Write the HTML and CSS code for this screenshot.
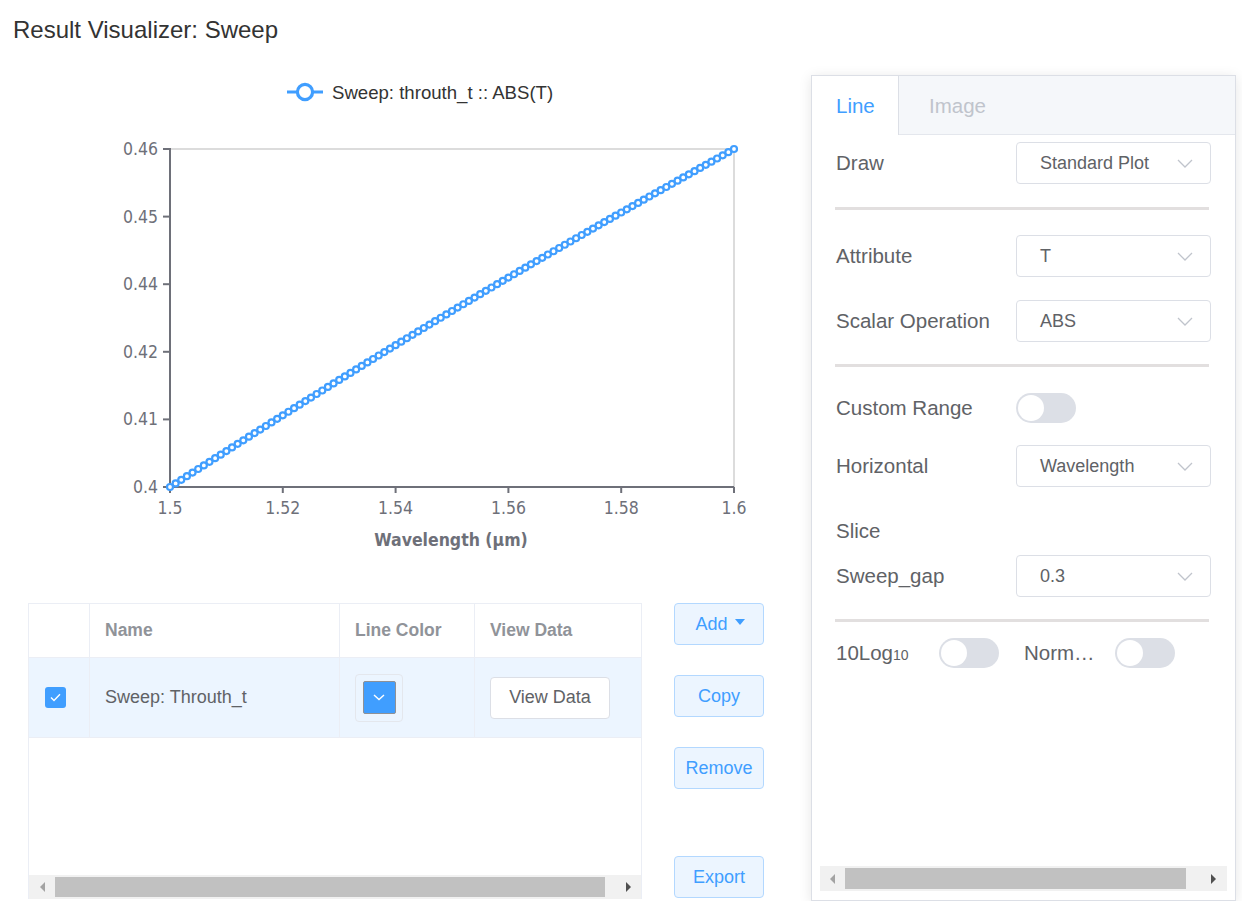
FILE: index.html
```html
<!DOCTYPE html>
<html>
<head>
<meta charset="utf-8">
<title>Result Visualizer</title>
<link rel="stylesheet" href="styles.css">
</head>
<body>
<div class="page">
  <div class="title">Result Visualizer: Sweep</div>
  <div class="main">
    <div class="left">
      <svg class="chart" width="800" height="543" viewBox="0 60 800 543">
        <line class="legend-line" x1="287" y1="92" x2="323" y2="92"/>
        <circle class="legend-dot" cx="305" cy="92" r="7.6"/>
        <text class="legend-text" x="332" y="98.5">Sweep: throuth_t :: ABS(T)</text>

        <line class="grid-line" x1="170" y1="149" x2="734" y2="149"/>
        <line class="grid-line" x1="734" y1="149" x2="734" y2="487"/>

        <line class="axis-line" x1="170" y1="148" x2="170" y2="488"/>
        <line class="axis-line" x1="169" y1="487" x2="734" y2="487"/>

        <line class="axis-line" x1="163" y1="149" x2="170" y2="149"/>
        <line class="axis-line" x1="163" y1="216.6" x2="170" y2="216.6"/>
        <line class="axis-line" x1="163" y1="284.2" x2="170" y2="284.2"/>
        <line class="axis-line" x1="163" y1="351.8" x2="170" y2="351.8"/>
        <line class="axis-line" x1="163" y1="419.4" x2="170" y2="419.4"/>
        <line class="axis-line" x1="163" y1="487" x2="170" y2="487"/>

        <line class="axis-line" x1="170" y1="487" x2="170" y2="493"/>
        <line class="axis-line" x1="282.8" y1="487" x2="282.8" y2="493"/>
        <line class="axis-line" x1="395.6" y1="487" x2="395.6" y2="493"/>
        <line class="axis-line" x1="508.4" y1="487" x2="508.4" y2="493"/>
        <line class="axis-line" x1="621.2" y1="487" x2="621.2" y2="493"/>
        <line class="axis-line" x1="734" y1="487" x2="734" y2="493"/>

        <text class="tick-label y-label" x="158" y="155">0.46</text>
        <text class="tick-label y-label" x="158" y="222.6">0.45</text>
        <text class="tick-label y-label" x="158" y="290.2">0.44</text>
        <text class="tick-label y-label" x="158" y="357.8">0.42</text>
        <text class="tick-label y-label" x="158" y="425.4">0.41</text>
        <text class="tick-label y-label" x="158" y="493">0.4</text>

        <text class="tick-label x-label" x="170" y="514">1.5</text>
        <text class="tick-label x-label" x="282.8" y="514">1.52</text>
        <text class="tick-label x-label" x="395.6" y="514">1.54</text>
        <text class="tick-label x-label" x="508.4" y="514">1.56</text>
        <text class="tick-label x-label" x="621.2" y="514">1.58</text>
        <text class="tick-label x-label" x="734" y="514">1.6</text>

        <text class="axis-name" x="451" y="546">Wavelength (μm)</text>

        <g id="series"></g>
      </svg>

      <div class="lower">
        <div class="table">
          <div class="trow thead">
            <div class="cell c-check"></div>
            <div class="cell c-name">Name</div>
            <div class="cell c-color">Line Color</div>
            <div class="cell c-view">View Data</div>
          </div>
          <div class="trow tbody">
            <div class="cell c-check">
              <span class="checkbox">
                <svg width="11" height="9" viewBox="0 0 11 9"><path class="check-mark" d="M1 4.5 L4 7.5 L10 1.2"/></svg>
              </span>
            </div>
            <div class="cell c-name">Sweep: Throuth_t</div>
            <div class="cell c-color">
              <span class="color-picker">
                <span class="swatch">
                  <svg width="12" height="7" viewBox="0 0 12 7"><path class="swatch-chevron" d="M1 1 L6 5.5 L11 1"/></svg>
                </span>
              </span>
            </div>
            <div class="cell c-view"><span class="btn-plain">View Data</span></div>
          </div>
          <div class="table-fill"></div>
          <div class="hscroll table-scroll">
            <span class="arrow arrow-left disabled"></span>
            <span class="thumb"></span>
            <span class="arrow arrow-right"></span>
          </div>
        </div>

        <div class="actions">
          <span class="btn-light btn-add">Add <span class="caret"></span></span>
          <span class="btn-light btn-copy">Copy</span>
          <span class="btn-light btn-remove">Remove</span>
          <span class="btn-light btn-export">Export</span>
        </div>
      </div>
    </div>

    <div class="panel">
      <div class="tabs">
        <div class="tab active">Line</div>
        <div class="tab tab-image">Image</div>
      </div>
      <div class="panel-body">
        <div class="form-row row-draw">
          <div class="label">Draw</div>
          <div class="select"><span class="select-text">Standard Plot</span><svg class="chev" width="16" height="9" viewBox="0 0 16 9"><path d="M1 1 L8 8 L15 1"/></svg></div>
        </div>
        <div class="divider div-1"></div>
        <div class="form-row row-attr">
          <div class="label">Attribute</div>
          <div class="select"><span class="select-text">T</span><svg class="chev" width="16" height="9" viewBox="0 0 16 9"><path d="M1 1 L8 8 L15 1"/></svg></div>
        </div>
        <div class="form-row row-scalar">
          <div class="label">Scalar Operation</div>
          <div class="select"><span class="select-text">ABS</span><svg class="chev" width="16" height="9" viewBox="0 0 16 9"><path d="M1 1 L8 8 L15 1"/></svg></div>
        </div>
        <div class="divider div-2"></div>
        <div class="form-row row-range">
          <div class="label">Custom Range</div>
          <span class="switch"><span class="knob"></span></span>
        </div>
        <div class="form-row row-horiz">
          <div class="label">Horizontal</div>
          <div class="select"><span class="select-text">Wavelength</span><svg class="chev" width="16" height="9" viewBox="0 0 16 9"><path d="M1 1 L8 8 L15 1"/></svg></div>
        </div>
        <div class="form-row row-slice">
          <div class="label">Slice</div>
        </div>
        <div class="form-row row-gap">
          <div class="label">Sweep_gap</div>
          <div class="select"><span class="select-text">0.3</span><svg class="chev" width="16" height="9" viewBox="0 0 16 9"><path d="M1 1 L8 8 L15 1"/></svg></div>
        </div>
        <div class="divider div-3"></div>
        <div class="form-row row-switches">
          <div class="label label-log">10Log<span class="sub">10</span></div>
          <span class="switch"><span class="knob"></span></span>
          <div class="label label-norm">Norm…</div>
          <span class="switch"><span class="knob"></span></span>
        </div>
      </div>
      <div class="hscroll panel-scroll">
        <span class="arrow arrow-left disabled"></span>
        <span class="thumb"></span>
        <span class="arrow arrow-right"></span>
      </div>
    </div>
  </div>
</div>
<script src="script.js"></script>
</body>
</html>
```

FILE: styles.css
```css
* { box-sizing: border-box; }

body {
  margin: 0;
  background: #ffffff;
  font-family: "Liberation Sans", Arial, sans-serif;
  color: #606266;
}

.page {
  width: 1242px;
}

.title {
  height: 60px;
  line-height: 60px;
  padding-left: 13px;
  font-size: 24px;
  color: #333333;
}

.main {
  display: flex;
  align-items: flex-start;
}

.left {
  width: 811px;
  display: flex;
  flex-direction: column;
}

.chart {
  display: block;
}

/* chart parts */
.legend-line { stroke: #409eff; stroke-width: 3; }
.legend-dot { fill: #ffffff; stroke: #409eff; stroke-width: 3.2; }
.legend-text {
  font-family: "Liberation Sans", Arial, sans-serif;
  font-size: 18.6px;
  fill: #333333;
}
.grid-line { stroke: #dcdcdc; stroke-width: 2; }
.axis-line { stroke: #6e7079; stroke-width: 2; }
.tick-label {
  font-family: "DejaVu Sans Condensed", "DejaVu Sans", sans-serif;
  font-stretch: condensed;
  font-size: 17.5px;
  fill: #6e7079;
}
.y-label { text-anchor: end; }
.x-label { text-anchor: middle; }
.axis-name {
  font-family: "DejaVu Sans Condensed", "DejaVu Sans", sans-serif;
  font-stretch: condensed;
  font-weight: bold;
  font-size: 17.5px;
  fill: #6e7079;
  text-anchor: middle;
}
.series-line { fill: none; stroke: #409eff; stroke-width: 2.5; }
.series-dot { fill: #ffffff; stroke: #409eff; stroke-width: 2.2; }

/* lower area */
.lower {
  display: flex;
  align-items: flex-start;
  padding-left: 28px;
}

.table {
  width: 614px;
  height: 296px;
  border: 1px solid #ebeef5;
  border-bottom: none;
  display: flex;
  flex-direction: column;
}

.trow {
  display: flex;
}

.thead {
  height: 54px;
  border-bottom: 1px solid #ebeef5;
  font-weight: bold;
  font-size: 17.5px;
  color: #909399;
}

.tbody {
  height: 80px;
  background: #ecf5ff;
  border-bottom: 1px solid #ebeef5;
  font-size: 18px;
  color: #606266;
}

.cell {
  display: flex;
  align-items: center;
  padding-left: 15px;
  border-right: 1px solid #ebeef5;
}

.c-check { width: 61px; padding-left: 16px; }
.c-name { width: 250px; }
.c-color { width: 135px; }
.c-view { width: 166px; border-right: none; }

.checkbox {
  width: 21px;
  height: 21px;
  border-radius: 3px;
  background: #409eff;
  display: flex;
  align-items: center;
  justify-content: center;
}
.check-mark { fill: none; stroke: #ffffff; stroke-width: 1.4; }

.color-picker {
  width: 48px;
  height: 48px;
  border: 1px solid #e4e7ed;
  border-radius: 4px;
  display: flex;
  align-items: center;
  justify-content: center;
}
.swatch {
  width: 33px;
  height: 33px;
  background: #409eff;
  border: 1px solid #8f9196;
  border-radius: 2px;
  display: flex;
  align-items: center;
  justify-content: center;
}
.swatch-chevron { fill: none; stroke: #ffffff; stroke-width: 1.4; }

.btn-plain {
  width: 120px;
  height: 42px;
  border: 1px solid #dcdfe6;
  border-radius: 4px;
  background: #ffffff;
  display: flex;
  align-items: center;
  justify-content: center;
  font-size: 18px;
  color: #606266;
}

.table-fill { flex: 1; }

/* fake scrollbars */
.hscroll {
  position: relative;
  background: #f1f1f1;
}
.table-scroll {
  height: 24px;
}
.hscroll .thumb {
  position: absolute;
  top: 2px;
  bottom: 2px;
  background: #c1c1c1;
}
.table-scroll .thumb { left: 26px; width: 550px; }
.hscroll .arrow {
  position: absolute;
  top: 50%;
  width: 0;
  height: 0;
  margin-top: -5px;
  border-top: 5px solid transparent;
  border-bottom: 5px solid transparent;
}
.hscroll .arrow-left {
  border-right: 5px solid #505050;
}
.hscroll .arrow-left.disabled { border-right-color: #a3a3a3; }
.hscroll .arrow-right {
  border-left: 5px solid #505050;
}
.table-scroll .arrow-left { left: 11px; }
.table-scroll .arrow-right { right: 10px; }

/* action buttons */
.actions {
  margin-left: 32px;
  display: flex;
  flex-direction: column;
}
.btn-light {
  width: 90px;
  height: 42px;
  border: 1px solid #b3d8ff;
  border-radius: 4px;
  background: #ecf5ff;
  color: #409eff;
  font-size: 18px;
  display: flex;
  align-items: center;
  justify-content: center;
}
.btn-add { padding-left: 2px; }
.caret {
  display: inline-block;
  width: 0;
  height: 0;
  margin-left: 7px;
  border-left: 5.5px solid transparent;
  border-right: 5.5px solid transparent;
  border-top: 6px solid #409eff;
  position: relative;
  top: -2px;
}
.btn-copy { margin-top: 30px; }
.btn-remove { margin-top: 30px; }
.btn-export { margin-top: 67px; }

/* right panel */
.panel {
  margin-top: 15px;
  width: 425px;
  height: 826px;
  border: 1px solid #dcdfe6;
  background: #ffffff;
  box-shadow: 0 2px 12px rgba(0, 0, 0, 0.10);
  display: flex;
  flex-direction: column;
}

.tabs {
  height: 59px;
  display: flex;
  background: #f5f7fa;
  border-bottom: 1px solid #e4e7ed;
}
.tab {
  height: 58px;
  line-height: 60px;
  font-size: 20.5px;
  color: #c0c4cc;
  padding: 0 30px;
}
.tab.active {
  width: 87px;
  padding: 0 0 0 24px;
  background: #ffffff;
  color: #409eff;
  border-right: 1px solid #dcdfe6;
  height: 59px;
}

.panel-body {
  padding: 7px 24px 0 24px;
}

.form-row {
  display: flex;
  align-items: center;
  height: 42px;
}
.label {
  width: 180px;
  font-size: 20.5px;
  color: #606266;
  white-space: nowrap;
}
.select {
  width: 195px;
  height: 42px;
  border: 1px solid #dcdfe6;
  border-radius: 4px;
  display: flex;
  align-items: center;
  justify-content: space-between;
  padding-left: 23px;
  padding-right: 17px;
}
.select-text {
  font-size: 18px;
  color: #606266;
}
.chev path { fill: none; stroke: #c0c4cc; stroke-width: 1.3; }

.divider {
  height: 3px;
  width: 374px;
  margin-left: -1px;
  background: #e2dfdf;
}
.div-1 { margin-top: 23px; }
.row-attr { margin-top: 25px; }
.row-scalar { margin-top: 23px; }
.div-2 { margin-top: 22px; }
.row-range { margin-top: 20px; }
.row-horiz { margin-top: 16px; }
.row-slice { margin-top: 23px; }
.row-gap { margin-top: 3px; }
.div-3 { margin-top: 22px; }
.row-switches { margin-top: 10px; }

.switch {
  width: 60px;
  height: 30px;
  border-radius: 15px;
  background: #dcdfe6;
  display: flex;
  align-items: center;
  padding-left: 2px;
  flex: none;
}
.knob {
  width: 26px;
  height: 26px;
  border-radius: 50%;
  background: #ffffff;
}

.label-log { width: 103px; }
.sub { font-size: 14px; }
.label-norm {
  width: 91px;
  margin-left: 25px;
}

.panel-scroll {
  margin: auto 8px 9px 8px;
  height: 25px;
}
.panel-scroll .thumb { left: 25px; width: 341px; }
.panel-scroll .arrow-left { left: 10px; }
.panel-scroll .arrow-right { right: 11px; }
```

FILE: script.js
```js
(function () {
  var ns = 'http://www.w3.org/2000/svg';
  var g = document.getElementById('series');
  var pts = [];
  for (var i = 0; i <= 100; i++) {
    var t = i / 100;
    var x = 170 + 564 * t;
    var y = 487 - 338 * t - 7 * Math.sin(Math.PI * t);
    pts.push([x, y]);
  }
  var pl = document.createElementNS(ns, 'polyline');
  pl.setAttribute('points', pts.map(function (p) { return p[0].toFixed(2) + ',' + p[1].toFixed(2); }).join(' '));
  pl.setAttribute('class', 'series-line');
  g.appendChild(pl);
  pts.forEach(function (p) {
    var c = document.createElementNS(ns, 'circle');
    c.setAttribute('cx', p[0].toFixed(2));
    c.setAttribute('cy', p[1].toFixed(2));
    c.setAttribute('r', '3');
    c.setAttribute('class', 'series-dot');
    g.appendChild(c);
  });
})();
```
